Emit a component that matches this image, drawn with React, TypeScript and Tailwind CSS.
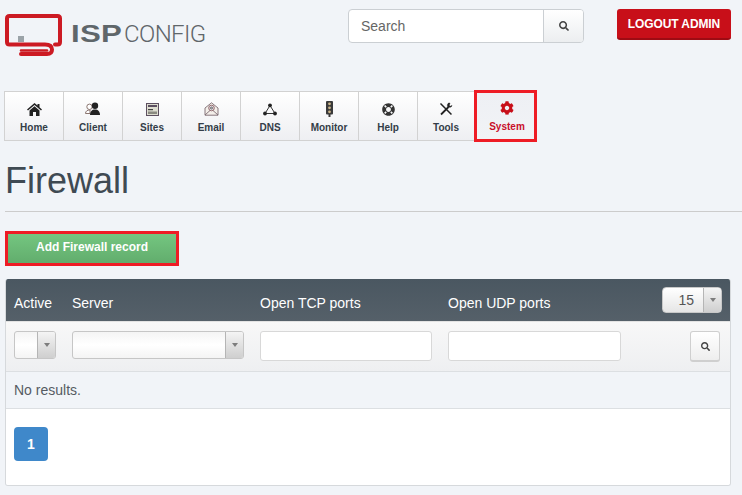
import React from 'react';
import {FaLifeRing, FaCog, FaSearch} from 'react-icons/fa';

const HomeIcon = () => (
    <svg width="15" height="13" viewBox="0 0 15 13">
        <path d="M0 6.500 7.500 0 10.500 2.600V1H12.500V4.300L15 6.500 14 7.500 7.500 2 1 7.500z" fill="#222"/>
        <path d="M2.500 7.500 7.500 3.200 12.500 7.500V13H9V9H6V13H2.500z" fill="#222"/>
    </svg>
);

const ClientIcon = () => (
    <svg width="16" height="14" viewBox="0 0 16 14">
        <circle cx="4.500" cy="4.800" r="2.700" fill="#fff" stroke="#8a7570" strokeWidth="1"/>
        <path d="M0.500 11.500C0.500 9 2.500 8 5 8V11.500z" fill="#fff" stroke="#8a7570" strokeWidth="1"/>
        <circle cx="10" cy="3.800" r="3.200" fill="#222"/>
        <path d="M5 13C5 9.500 7 7.500 10 7.500S15 9.500 15 13z" fill="#222"/>
    </svg>
);

const SitesIcon = () => (
    <svg width="13" height="13" viewBox="0 0 13 13">
        <rect x="0.500" y="0.500" width="12" height="12" fill="#ddddd0" stroke="#5d5060"/>
        <rect x="2" y="2" width="9" height="2" fill="#5b4f60"/>
        <rect x="2" y="6" width="5" height="1.200" fill="#444"/>
        <rect x="2" y="8.500" width="9" height="2.500" fill="#8a8a80"/>
    </svg>
);

const EmailIcon = () => (
    <svg width="15" height="14" viewBox="0 0 15 14" fill="none" stroke="#7a6a70" strokeWidth="0.900">
        <path d="M1 6 7.500 0.800 14 6V13.200H1z" fill="#f4efea"/>
        <path d="M1 13 6 8.500M14 13 9 8.500"/>
        <circle cx="7.500" cy="6" r="2.800" stroke="#8b5f62" fill="#e6e2e8"/>
        <circle cx="7.500" cy="6" r="1" stroke="#555"/>
    </svg>
);

const DnsIcon = () => (
    <svg width="14" height="13" viewBox="0 0 14 13">
        <path d="M7 2.500 2 10.500h10z" fill="none" stroke="#333" strokeWidth="1"/>
        <circle cx="7" cy="2.300" r="1.900" fill="#222"/>
        <circle cx="2" cy="10.500" r="1.900" fill="#222"/>
        <circle cx="12" cy="10.500" r="1.900" fill="#222"/>
    </svg>
);

const MonitorIcon = () => (
    <svg width="9" height="16" viewBox="0 0 9 16">
        <rect x="1" y="0" width="7" height="13.500" rx="1" fill="#3a3a3a"/>
        <rect x="3.500" y="13" width="2" height="3" fill="#3a3a3a"/>
        <circle cx="4.500" cy="2.800" r="1.400" fill="#c9b48a"/>
        <circle cx="4.500" cy="6.800" r="1.400" fill="#c9b48a"/>
        <circle cx="4.500" cy="10.800" r="1.400" fill="#c9b48a"/>
    </svg>
);

const ToolsIcon = () => (
    <svg width="14" height="14" viewBox="0 0 14 14" fill="none" stroke="#222">
        <path d="M1.500 1.500 12.500 12.500" strokeWidth="1.500"/>
        <path d="M2 12.500 9.500 5" strokeWidth="1.800"/>
        <path d="M9 1.500C7.800 3 8.500 5 9.500 5.200S12.500 5.500 13 3.500L11.200 4.300 10.200 3.200 11 1.200C10.300 1 9.500 1 9 1.500Z" fill="#222" strokeWidth="0.500"/>
    </svg>
);

const navItems = [
    {label: 'Home', icon: <HomeIcon/>},
    {label: 'Client', icon: <ClientIcon/>},
    {label: 'Sites', icon: <SitesIcon/>},
    {label: 'Email', icon: <EmailIcon/>},
    {label: 'DNS', icon: <DnsIcon/>},
    {label: 'Monitor', icon: <MonitorIcon/>},
    {label: 'Help', icon: <FaLifeRing size={13} color="#333"/>},
    {label: 'Tools', icon: <ToolsIcon/>},
];

const SelectArrow = ({width}: {width: string}) => (
    <span className={`${width} h-full flex items-center justify-center border-l border-[#b5b5b5] bg-gradient-to-b from-[#f4f4f4] to-[#cfcfcf]`}>
        <span className="w-0 h-0 border-l-[3px] border-r-[3px] border-t-[4px] border-l-transparent border-r-transparent border-t-[#7d7d7d]"/>
    </span>
);

const App: React.FC = () => {
    return (
        <div className="w-[742px] h-[495px] overflow-hidden bg-[#f1f4f8] font-['Liberation_Sans',Arial,sans-serif] text-[#3c4650]">
            {/* Header */}
            <div className="flex h-[90px] items-start">
                <div className="flex w-[348px] pl-[5px] pt-[14px]">
                    <svg width="58" height="43" viewBox="0 0 58 43" className="shrink-0">
                        <path d="M50 30.500H52.500Q55 30.500 55 28V4.500Q55 2 52.500 2H4.500Q2 2 2 4.500V28Q2 30.500 4.500 30.500H40Q47 30.500 47 35.500Q47 40 42 40H16" fill="none" stroke="#cc1a23" strokeWidth="4" strokeLinecap="round"/>
                        <path d="M16 36.500H42" stroke="#cc1a23" strokeWidth="2.500" strokeLinecap="round"/>
                        <rect x="13" y="22" width="6" height="6" fill="#9ba3a8"/>
                    </svg>
                    <div className="ml-[8px] mt-[6px] flex items-baseline text-[#5f666a] text-[24px] leading-[28px]">
                        <span className="inline-block w-[53px] origin-left scale-x-[1.3] font-bold tracking-[0.2px]">ISP</span>
                        <span className="inline-block w-[80px] font-['Roboto',sans-serif] font-light text-[#5f666a] tracking-[-0.6px]">CONFIG</span>
                    </div>
                </div>
                <div className="mt-[9px] flex h-[34px] w-[236px] rounded-[4px] border border-[#cbcfd3] bg-white overflow-hidden">
                    <span className="flex-1 pl-3 text-[14px] leading-[32px] text-[#666]">Search</span>
                    <span className="w-[40px] flex items-center justify-center border-l border-[#cbcfd3] bg-gradient-to-b from-white to-[#eceef0]">
                        <FaSearch size={10} color="#444"/>
                    </span>
                </div>
                <button className="ml-[33px] mt-[9px] h-[31px] w-[114px] rounded-[3px] bg-[#c80f19] border-b-2 border-[#9e0b13] text-white text-[12px] font-bold leading-none tracking-[-0.1px]">
                    LOGOUT ADMIN
                </button>
            </div>

            {/* Main nav */}
            <div className="flex items-center pl-[4px] h-[52px]">
                <div className="flex h-[50px] border border-r-0 border-[#d2d2d2] bg-gradient-to-b from-white to-[#eeeff2]">
                    {navItems.map((item) => (
                        <div key={item.label} className="w-[59px] flex flex-col items-center border-r border-[#d2d2d2] pt-[9px] last:w-[56px] last:border-r-0">
                            <span className="h-[16px] flex items-center justify-center">{item.icon}</span>
                            <span className="mt-[5px] text-[10px] leading-[12px] font-bold text-[#333d48]">{item.label}</span>
                        </div>
                    ))}
                </div>
                <div className="w-[63px] h-[52px] border-[3px] border-[#ee1c25] flex flex-col items-center pl-[3px] pt-[7px] bg-gradient-to-b from-[#eef0f4] to-[#f1f3f6]">
                    <span className="h-[16px] flex items-center justify-center"><FaCog size={14} color="#c80f19"/></span>
                    <span className="mt-[5px] text-[10px] leading-[12px] font-bold text-[#c80f2a]">System</span>
                </div>
            </div>

            {/* Title */}
            <h1 className="ml-[5px] mt-[18px] text-[36px] leading-[42px] font-normal text-[#3f4a53]">Firewall</h1>
            <div className="ml-[5px] mt-[9px] border-t border-[#cccccc]"/>

            {/* Add button */}
            <div className="ml-[5px] mt-[19px] w-[174px] h-[35px] border-[3px] border-[#ee1c25] bg-gradient-to-b from-[#74c680] to-[#62ad6d] flex items-center justify-center pb-[3px] text-white text-[12px] font-bold">
                Add Firewall record
            </div>

            {/* Table */}
            <div className="ml-[5px] mt-[13px] w-[726px] h-[207px] rounded-[3px] border border-t-0 border-[#d6d9dc] overflow-hidden">
                <div className="-mx-px h-[42px] bg-gradient-to-b from-[#4a5761] to-[#556069] border-b-0 pl-[9px] grid grid-cols-[58px_188px_188px_1fr] items-center text-white text-[14px] pt-[6px] relative">
                    <span>Active</span>
                    <span>Server</span>
                    <span>Open TCP ports</span>
                    <span>Open UDP ports</span>
                    <div className="absolute left-[657px] top-[8px] w-[60px] h-[26px] rounded-[4px] bg-gradient-to-b from-white to-[#e6e6e6] border border-[#c8c8c8] flex overflow-hidden text-[#555]">
                        <span className="flex-1 text-right pr-[9px] leading-[24px]">15</span>
                        <SelectArrow width="w-[18px]"/>
                    </div>
                </div>
                <div className="h-[51px] border-b border-[#dcdfe2] border-t border-t-[#e3e3e3] bg-gradient-to-b from-[#f8f8f8] to-[#eeeff1] pl-[8px] grid grid-cols-[58px_188px_188px_242px_1fr] items-start pt-[9px]">
                    <div className="w-[42px] h-[28px] rounded-[3px] border border-[#c6c6c6] bg-gradient-to-b from-[#f4f4f4] via-white to-[#f4f4f4] flex justify-end overflow-hidden">
                        <SelectArrow width="w-[18px]"/>
                    </div>
                    <div className="w-[172px] h-[28px] rounded-[3px] border border-[#c6c6c6] bg-gradient-to-b from-[#f4f4f4] via-white to-[#f4f4f4] flex justify-end overflow-hidden">
                        <SelectArrow width="w-[18px]"/>
                    </div>
                    <div className="w-[172px] h-[30px] rounded-[3px] border border-[#d8d8d8] bg-white"/>
                    <div className="w-[173px] h-[30px] rounded-[3px] border border-[#d8d8d8] bg-white"/>
                    <div className="w-[30px] h-[31px] rounded-[3px] border border-[#cfcfcf] border-b-2 bg-gradient-to-b from-white to-[#eeeeee] flex items-center justify-center">
                        <FaSearch size={9} color="#444"/>
                    </div>
                </div>
                <div className="h-[37px] border-b border-[#dcdfe2] pl-[8px] text-[14px] leading-[36px] text-[#555b62]">No results.</div>
                <div className="h-[77px] bg-white pl-[8px] pt-[18px]">
                    <div className="w-[34px] h-[34px] rounded-[4px] bg-[#3f88ca] text-white text-[14px] font-bold flex items-center justify-center">1</div>
                </div>
            </div>
        </div>
    );
};

export default App;
